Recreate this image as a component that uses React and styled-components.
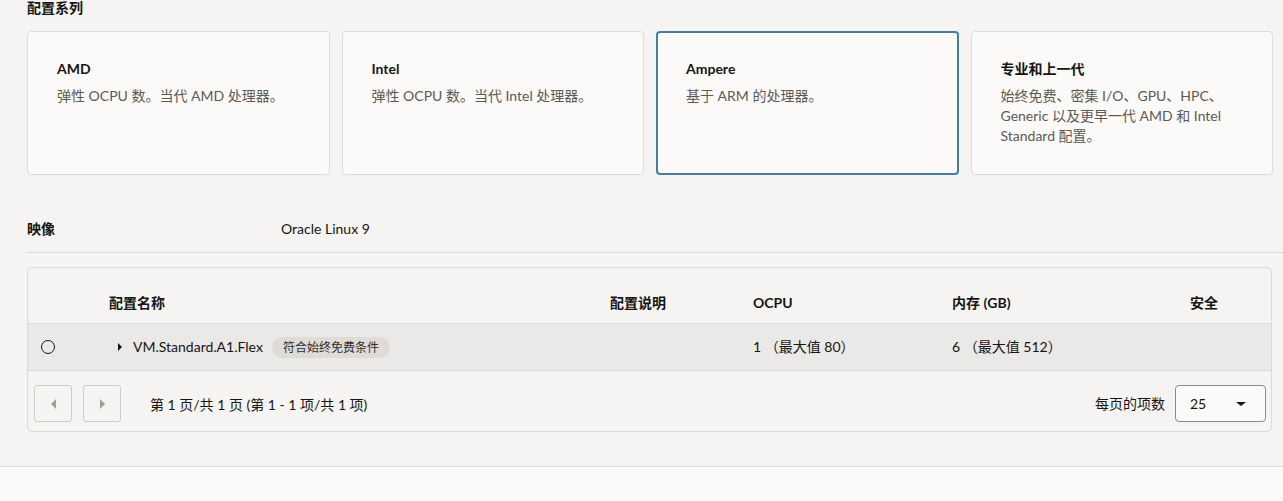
import React from "react";
import styled, { createGlobalStyle } from "styled-components";

const Global = createGlobalStyle`
  html, body { margin: 0; padding: 0; }
  body {
    background: #f5f4f2;
    font-family: "Lato", "Noto Sans CJK SC", sans-serif;
    color: #161513;
    font-size: 14px;
  }
`;

const Page = styled.div`
  width: 1283px;
  height: 501px;
  display: flex;
  flex-direction: column;
  overflow: hidden;
`;

const Main = styled.div`
  padding-left: 27px;
  display: flex;
  flex-direction: column;
`;

const SectionTitle = styled.div`
  font-size: 14px;
  line-height: 16px;
  font-weight: 700;
`;

const CardGrid = styled.div`
  margin-top: 15px;
  margin-right: 10px;
  display: grid;
  grid-template-columns: repeat(4, 1fr);
  gap: 12px;
`;

const Card = styled.div`
  box-sizing: border-box;
  height: 144px;
  background: #fbfaf9;
  border: ${(p) => (p.$selected ? "2px solid #447f9f" : "1px solid #dedcd9")};
  border-radius: 4px;
  padding: ${(p) => (p.$selected ? "26px 28px" : "27px 29px")};
  display: flex;
  flex-direction: column;
  gap: 7px;
`;

const CardTitle = styled.div`
  font-size: 14px;
  line-height: 20px;
  font-weight: 700;
  color: #161513;
`;

const CardText = styled.div`
  font-size: 14px;
  line-height: 20px;
  color: #5c5955;
`;

const InfoRow = styled.div`
  margin-top: 30px;
  height: 48px;
  box-sizing: border-box;
  display: flex;
  align-items: center;
  border-bottom: 1px solid #dcdad7;
`;

const InfoLabel = styled.div`
  width: 254px;
  font-weight: 700;
  line-height: 20px;
`;

const InfoValue = styled.div`
  line-height: 20px;
`;

const Panel = styled.div`
  margin-top: 14px;
  margin-right: 11px;
  border: 1px solid #dcdad7;
  border-radius: 5px;
  display: flex;
  flex-direction: column;
`;

const cols = "81px 501px 143px 199px 238px 1fr";

const HeadRow = styled.div`
  display: grid;
  grid-template-columns: ${cols};
  height: 56px;
  align-items: end;
  padding-bottom: 10px;
  box-sizing: border-box;
  border-bottom: 1px solid #dcdad7;
`;

const HeadCell = styled.div`
  font-weight: 700;
  line-height: 20px;
`;

const DataRow = styled.div`
  display: grid;
  grid-template-columns: ${cols};
  height: 47px;
  box-sizing: border-box;
  align-items: center;
  background: #ebe9e7;
  border-bottom: 1px solid #dcdad7;
`;

const Cell = styled.div`
  display: flex;
  align-items: center;
  line-height: 20px;
  white-space: nowrap;
`;

const Radio = styled.span`
  box-sizing: border-box;
  width: 14px;
  height: 14px;
  margin-left: 13px;
  border: 1.5px solid #161513;
  border-radius: 50%;
`;

const Expander = styled.span`
  width: 0;
  height: 0;
  margin-left: 9px;
  margin-right: 11px;
  border-top: 4px solid transparent;
  border-bottom: 4px solid transparent;
  border-left: 4px solid #161513;
`;

const Badge = styled.span`
  margin-left: 9px;
  height: 21px;
  padding: 0 11px;
  border-radius: 11px;
  background: #dfdcd8;
  font-size: 12px;
  line-height: 21px;
  color: #2e2c2a;
`;

const Pager = styled.div`
  height: 60px;
  box-sizing: border-box;
  display: flex;
  align-items: flex-start;
  padding: 14px 5px 0 6px;
`;

const PageButton = styled.button`
  box-sizing: border-box;
  width: 38px;
  height: 37px;
  margin-right: 11px;
  padding: 0;
  background: transparent;
  border: 1px solid #cfccc8;
  border-radius: 3px;
  display: flex;
  align-items: center;
  justify-content: center;
`;

const Arrow = styled.span`
  width: 0;
  height: 0;
  border-top: 5px solid transparent;
  border-bottom: 5px solid transparent;
  ${(p) =>
    p.$dir === "left"
      ? "border-right: 5px solid #a19d98;"
      : "border-left: 5px solid #a19d98;"}
`;

const PageInfo = styled.div`
  margin-left: 18px;
  line-height: 20px;
  padding-top: 10px;
`;

const Spacer = styled.div`
  flex: 1;
`;

const PerPage = styled.div`
  margin-right: 10px;
  line-height: 20px;
  padding-top: 9px;
`;

const Select = styled.div`
  box-sizing: border-box;
  width: 91px;
  height: 37px;
  border: 1px solid #8d8984;
  border-radius: 4px;
  background: #fbfaf9;
  display: flex;
  align-items: center;
  justify-content: space-between;
  padding: 0 19px 0 14px;
`;

const Caret = styled.span`
  width: 0;
  height: 0;
  border-left: 5px solid transparent;
  border-right: 5px solid transparent;
  border-top: 4px solid #161513;
`;

const Footer = styled.div`
  margin-top: 34px;
  flex: 1;
  border-top: 1px solid #dedcd9;
  background: #fafaf9;
`;

const families = [
  { name: "AMD", text: "弹性 OCPU 数。当代 AMD 处理器。" },
  { name: "Intel", text: "弹性 OCPU 数。当代 Intel 处理器。" },
  { name: "Ampere", text: "基于 ARM 的处理器。", selected: true },
  {
    name: "专业和上一代",
    text: "始终免费、密集 I/O、GPU、HPC、Generic 以及更早一代 AMD 和 Intel Standard 配置。",
  },
];

export default function App() {
  return (
    <Page>
      <Global />
      <Main>
        <SectionTitle>配置系列</SectionTitle>
        <CardGrid>
          {families.map((f) => (
            <Card key={f.name} $selected={f.selected}>
              <CardTitle>{f.name}</CardTitle>
              <CardText>{f.text}</CardText>
            </Card>
          ))}
        </CardGrid>

        <InfoRow>
          <InfoLabel>映像</InfoLabel>
          <InfoValue>Oracle Linux 9</InfoValue>
        </InfoRow>

        <Panel>
          <HeadRow>
            <HeadCell />
            <HeadCell>配置名称</HeadCell>
            <HeadCell>配置说明</HeadCell>
            <HeadCell>OCPU</HeadCell>
            <HeadCell>内存 (GB)</HeadCell>
            <HeadCell>安全</HeadCell>
          </HeadRow>
          <DataRow>
            <Cell>
              <Radio />
            </Cell>
            <Cell>
              <Expander />
              VM.Standard.A1.Flex
              <Badge>符合始终免费条件</Badge>
            </Cell>
            <Cell />
            <Cell>1 （最大值 80）</Cell>
            <Cell>6 （最大值 512）</Cell>
            <Cell />
          </DataRow>
          <Pager>
            <PageButton aria-label="上一页">
              <Arrow $dir="left" />
            </PageButton>
            <PageButton aria-label="下一页">
              <Arrow $dir="right" />
            </PageButton>
            <PageInfo>第 1 页/共 1 页 (第 1 - 1 项/共 1 项)</PageInfo>
            <Spacer />
            <PerPage>每页的项数</PerPage>
            <Select>
              <span>25</span>
              <Caret />
            </Select>
          </Pager>
        </Panel>
      </Main>
      <Footer />
    </Page>
  );
}
